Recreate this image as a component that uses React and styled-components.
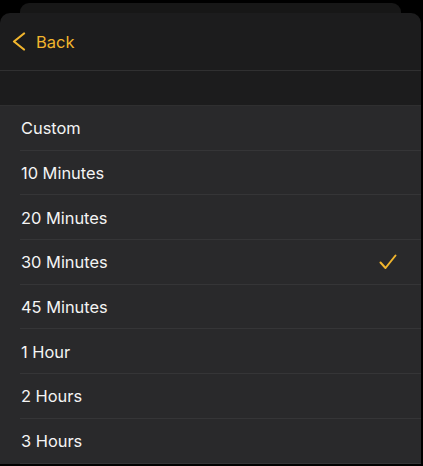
import React from "react";
import styled, { createGlobalStyle } from "styled-components";

const GlobalStyle = createGlobalStyle`
  html, body {
    margin: 0;
    padding: 0;
    background: #000;
    font-family: Inter, "Liberation Sans", sans-serif;
    -webkit-font-smoothing: antialiased;
  }
`;

const Screen = styled.div`
  width: 423px;
  height: 466px;
  overflow: hidden;
  background: #000;
  padding-top: 3px;
  box-sizing: border-box;
`;

const PeekCard = styled.div`
  height: 10px;
  margin: 0 22px 0 20px;
  background: #171717;
  border-radius: 9px 9px 0 0;
`;

const Sheet = styled.div`
  width: 421px;
  background: #1c1c1d;
  border-radius: 10px 10px 0 0;
  overflow: hidden;
`;

const Header = styled.div`
  height: 57px;
  display: flex;
  align-items: center;
  padding-left: 12px;
  border-bottom: 1px solid #303031;
`;

const BackButton = styled.button`
  display: flex;
  align-items: center;
  gap: 10px;
  background: none;
  border: 0;
  padding: 0;
  color: #f1b52d;
  font-family: inherit;
  font-size: 16.5px;
  cursor: pointer;
`;

const Band = styled.div`
  height: 34px;
  border-bottom: 1px solid #2f2f30;
`;

const List = styled.ul`
  list-style: none;
  margin: 0;
  padding: 0;
  background: #29292b;
`;

const Row = styled.li`
  position: relative;
  height: 44.7px;
  display: flex;
  align-items: center;
  justify-content: space-between;
  padding: 0 24px 0 21px;
  color: #f4f4f4;
  font-size: 16.4px;

  &::after {
    content: "";
    position: absolute;
    left: 20px;
    right: 0;
    bottom: 0;
    height: 1px;
    background: #353537;
  }
`;

const Chevron = () => (
  <svg width="14" height="19" viewBox="0 0 14 19" fill="none">
    <path
      d="M12 1.5 L2 9.5 L12 17.5"
      stroke="#f1b52d"
      strokeWidth="2.2"
      strokeLinecap="round"
      strokeLinejoin="round"
    />
  </svg>
);

const Check = () => (
  <svg width="18" height="16" viewBox="0 0 18 16" fill="none">
    <path
      d="M1.5 8.5 L6.5 14 L16.5 1.5"
      stroke="#f1b52d"
      strokeWidth="2"
      strokeLinecap="round"
      strokeLinejoin="round"
    />
  </svg>
);

const options = [
  "Custom",
  "10 Minutes",
  "20 Minutes",
  "30 Minutes",
  "45 Minutes",
  "1 Hour",
  "2 Hours",
  "3 Hours",
];

export default function App() {
  const selected = "30 Minutes";
  return (
    <Screen>
      <GlobalStyle />
      <PeekCard />
      <Sheet>
        <Header>
          <BackButton>
            <Chevron />
            Back
          </BackButton>
        </Header>
        <Band />
        <List>
          {options.map((o) => (
            <Row key={o}>
              {o}
              {o === selected && <Check />}
            </Row>
          ))}
        </List>
      </Sheet>
    </Screen>
  );
}
